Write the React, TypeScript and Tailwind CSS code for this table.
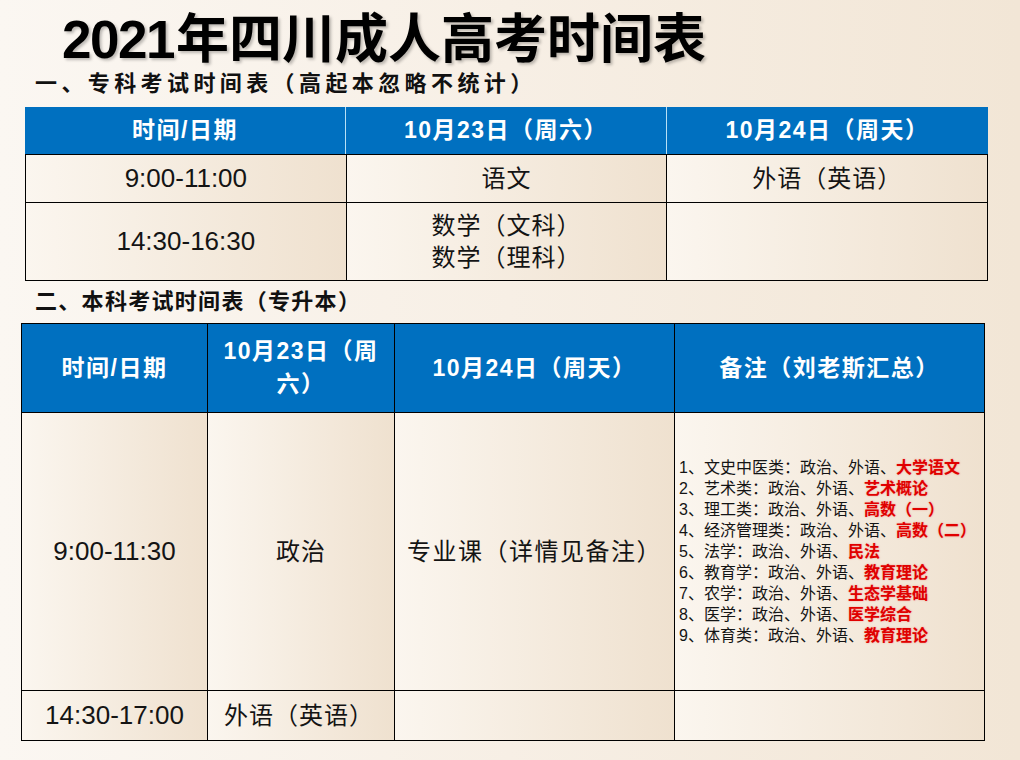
import React from "react";

const cjk = "font-['Liberation_Sans','Noto_Sans_CJK_SC',sans-serif]";
const cellBg = "bg-gradient-to-r from-[#fbf6ef] to-[#efe1cf]";

const notes: [string, string][] = [
  ["1、文史中医类：政治、外语、", "大学语文"],
  ["2、艺术类：政治、外语、", "艺术概论"],
  ["3、理工类：政治、外语、", "高数（一）"],
  ["4、经济管理类：政治、外语、", "高数（二）"],
  ["5、法学：政治、外语、", "民法"],
  ["6、教育学：政治、外语、", "教育理论"],
  ["7、农学：政治、外语、", "生态学基础"],
  ["8、医学：政治、外语、", "医学综合"],
  ["9、体育类：政治、外语、", "教育理论"],
];

export default function App() {
  return (
    <div
      className={`w-[1020px] h-[760px] overflow-hidden bg-gradient-to-r from-[#fbf7f2] via-[#f7efe5] to-[#f2e6d6] text-[#141414] ${cjk}`}
    >
      {/* Title */}
      <div className="pl-[62px] pt-[8px] h-[66px] flex items-end">
        <h1 className="text-[53px] leading-none font-bold text-black [text-shadow:2px_2px_3px_rgba(0,0,0,0.25)]">
          <span className="text-[53px] tracking-[-1.5px]">2021</span>
          <span className="ml-[2px]">年四川成人高考时间表</span>
        </h1>
      </div>

      {/* Section 1 heading */}
      <div className="pl-[35px] mt-[5px] text-[22px] leading-[26px] font-bold tracking-[4.4px] text-[#111]">
        一、专科考试时间表（高起本忽略不统计）
      </div>

      {/* Table 1 */}
      <div className="ml-[25px] mt-[10px] w-[963px]">
        <div className="grid grid-cols-3 h-[47px] bg-[#0070c0] text-white font-bold text-[23px] tracking-[1.5px]">
          <div className="flex items-center justify-center border-r border-[#b8e0f5]">时间/日期</div>
          <div className="flex items-center justify-center border-r border-[#b8e0f5]">10月23日（周六）</div>
          <div className="flex items-center justify-center">10月24日（周天）</div>
        </div>
        <div className="grid grid-cols-3 border-l border-black">
          <div className={`h-[48px] flex items-center justify-center border-r border-t border-black ${cellBg} text-[26px] font-['Liberation_Sans',sans-serif]`}>
            9:00-11:00
          </div>
          <div className={`h-[48px] flex items-center justify-center border-r border-t border-black ${cellBg} text-[24px] tracking-[1px]`}>
            语文
          </div>
          <div className={`h-[48px] flex items-center justify-center border-r border-t border-black ${cellBg} text-[24px] tracking-[1px]`}>
            外语（英语）
          </div>
          <div className={`h-[79px] flex items-center justify-center border-r border-t border-b border-black ${cellBg} text-[26px] font-['Liberation_Sans',sans-serif]`}>
            14:30-16:30
          </div>
          <div className={`h-[79px] flex flex-col items-center justify-center border-r border-t border-b border-black ${cellBg} text-[24px] leading-[32px] tracking-[1px]`}>
            <span>数学（文科）</span>
            <span>数学（理科）</span>
          </div>
          <div className={`h-[79px] border-r border-t border-b border-black ${cellBg}`} />
        </div>
      </div>

      {/* Section 2 heading */}
      <div className="pl-[35px] mt-[8px] text-[22px] leading-[26px] font-bold tracking-[1.3px] text-[#111]">
        二、本科考试时间表（专升本）
      </div>

      {/* Table 2 */}
      <div className="ml-[21px] mt-[8px] w-[964px] border border-black">
        <div className="grid grid-cols-[186px_187px_280px_309px] h-[88px] bg-[#0070c0] text-white font-bold text-[23px] tracking-[1.5px]">
          <div className="flex items-center justify-center border-r border-black">时间/日期</div>
          <div className="flex flex-col items-center justify-center border-r border-black leading-[33px] text-center">
            <span>10月23日（周</span>
            <span>六）</span>
          </div>
          <div className="flex items-center justify-center border-r border-black">10月24日（周天）</div>
          <div className="flex items-center justify-center">备注（刘老斯汇总）</div>
        </div>
        <div className="grid grid-cols-[186px_187px_280px_309px] border-t border-black">
          <div className={`h-[277px] flex items-center justify-center border-r border-black ${cellBg} text-[26px] font-['Liberation_Sans',sans-serif]`}>
            9:00-11:30
          </div>
          <div className={`h-[277px] flex items-center justify-center border-r border-black ${cellBg} text-[24px] tracking-[1px]`}>
            政治
          </div>
          <div className={`h-[277px] flex items-center justify-center border-r border-black ${cellBg} text-[24px] tracking-[1.5px]`}>
            专业课（详情见备注）
          </div>
          <div className={`h-[277px] flex flex-col justify-center pl-[4px] ${cellBg} text-[16px] leading-[21px] whitespace-nowrap`}>
            {notes.map(([a, b]) => (
              <div key={a}>
                <span>{a}</span>
                <span className="font-bold text-[#e00000] [text-shadow:0_0_2px_rgba(230,0,0,0.35)]">{b}</span>
              </div>
            ))}
          </div>
          <div className={`h-[50px] flex items-center justify-center border-r border-t border-black ${cellBg} text-[26px] font-['Liberation_Sans',sans-serif]`}>
            14:30-17:00
          </div>
          <div className={`h-[50px] flex items-center pl-[16px] border-r border-t border-black ${cellBg} text-[24px] tracking-[1px]`}>
            外语（英语）
          </div>
          <div className={`h-[50px] border-r border-t border-black ${cellBg}`} />
          <div className={`h-[50px] border-t border-black ${cellBg}`} />
        </div>
      </div>
    </div>
  );
}
